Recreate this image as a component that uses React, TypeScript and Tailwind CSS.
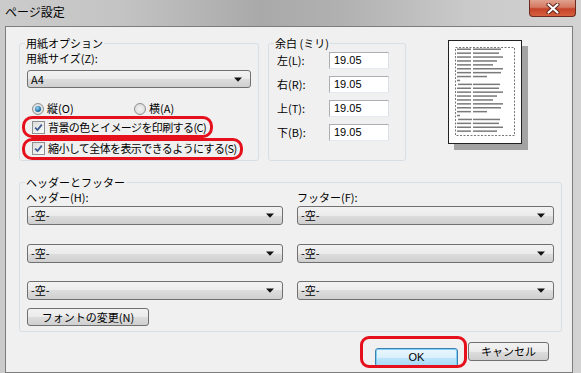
import type { ReactNode } from "react";

const FONT = "font-['Noto_Sans_CJK_JP','Noto_Sans',sans-serif]";

function Arrow() {
  return (
    <svg width="8" height="5" viewBox="0 0 8 5" className="shrink-0">
      <path d="M0 0.5h8L4 4.8z" fill="#111" />
    </svg>
  );
}

function Combo({ value, className = "" }: { value: string; className?: string }) {
  return (
    <div
      className={`flex items-center justify-between rounded-[3px] border border-[#707070] bg-[linear-gradient(#f2f2f2_0%,#ebebeb_50%,#dddddd_50%,#cfcfcf_100%)] pl-[3px] pr-[8px] text-[11px] leading-[13px] text-black ${className}`}
    >
      <span>{value}</span>
      <Arrow />
    </div>
  );
}

function Radio({ checked }: { checked?: boolean }) {
  return (
    <span className="grid h-[12px] w-[12px] shrink-0 place-items-center rounded-full border border-[#8e8f8f] bg-[radial-gradient(circle,#f4f4f4,#d4d4d4)]">
      {checked && (
        <span className="h-[6px] w-[6px] rounded-full bg-[radial-gradient(circle_at_40%_35%,#9fd6f2,#1b6fa8_60%,#0f4a78)]" />
      )}
    </span>
  );
}

function Check() {
  return (
    <span className="grid h-[13px] w-[13px] shrink-0 place-items-center border border-[#8e8f8f] bg-[linear-gradient(135deg,#dcdcdc,#fbfbfb)]">
      <svg width="9" height="9" viewBox="0 0 9 9">
        <path d="M1.2 4.6 3.5 7 7.8 1.6" fill="none" stroke="#3b5a8f" strokeWidth="1.8" />
      </svg>
    </span>
  );
}

function Group({ title, className = "", children }: { title: string; className?: string; children: ReactNode }) {
  return (
    <fieldset className={`rounded-[3px] border border-[#d5dfe5] px-[6px] ${className}`}>
      <legend className="-ml-[1px] px-[1px] text-[11px] leading-[12px]">{title}</legend>
      {children}
    </fieldset>
  );
}

function Preview() {
  const lines = [
    44, 42, 46, 40, 36, 46, 44, 30, 3,
    43, 42, 46, 40, 36, 46, 44, 30, 3,
    43, 42, 46, 40,
  ];
  return (
    <svg width="82" height="112" viewBox="0 0 82 112" className="ml-[42px] mt-[3px] shrink-0">
      <rect x="6" y="6" width="74" height="104" fill="#a3a3a3" />
      <rect x="0.5" y="0.5" width="73" height="103" fill="#fff" stroke="#222" />
      <rect x="7.5" y="7.5" width="59" height="88" fill="none" stroke="#777" strokeDasharray="2 1.5" />
      {lines.map((w, i) => (
        <g key={i} fill="#7a7a7a">
          <rect x={9 + (i === 9 || i === 18 ? 1 : 0)} y={8.5 + i * 3.9} width={Math.min(w, 14)} height="1.5" />
          {w > 14 && <rect x={25} y={8.5 + i * 3.9} width={w - 16} height="1.5" />}
        </g>
      ))}
    </svg>
  );
}

export default function App() {
  return (
    <div
      className={`flex h-[373px] w-[581px] flex-col overflow-hidden bg-[linear-gradient(90deg,#cbcbcb_0%,#c4c4c4_20%,#a9a9a9_45%,#b2b2b2_60%,#c9c9c9_80%,#d3d3d3_100%)] text-black ${FONT}`}
    >
      {/* title bar */}
      <div className="flex h-[26px] shrink-0 items-start justify-between pl-[5px] pr-[5px]">
        <span className="mt-[5px] text-[12px] leading-[14px]">ページ設定</span>
        <button
          type="button"
          className="grid h-[17px] w-[47px] place-items-center rounded-b-[4px] border border-t-0 border-[#6d2a1f] bg-[linear-gradient(#e0a18e_0%,#d47a62_45%,#c5432a_55%,#d6603f_100%)]"
        >
          <svg width="14" height="11" viewBox="0 0 14 11">
            <path d="M2.5 1.5 11.5 9.5M11.5 1.5 2.5 9.5" stroke="#5a2118" strokeWidth="4" strokeLinecap="round" />
            <path d="M2.5 1.5 11.5 9.5M11.5 1.5 2.5 9.5" stroke="#fff" strokeWidth="2.2" strokeLinecap="round" />
          </svg>
        </button>
      </div>

      {/* client area */}
      <div className="ml-[5px] mr-[8px] flex-1 border border-[#7d7d7d] bg-[#f0f0f0] pl-[13px] pr-[10px] pt-[10px]">
        <div className="flex items-start">
          <Group title="用紙オプション" className="h-[124px] w-[240px]">
            <div className="mt-[3px] text-[11px] leading-[12px]">用紙サイズ(Z):</div>
            <Combo value="A4" className="ml-[1px] mt-[6px] h-[18px] w-[224px]" />
            <div className="mt-[14px] flex h-[13px] items-center text-[11px] leading-[13px]">
              <label className="ml-[6px] flex w-[102px] items-center gap-[3px]">
                <Radio checked />
                縦(O)
              </label>
              <label className="flex items-center gap-[3px]">
                <Radio />
                横(A)
              </label>
            </div>
            <div className="relative mt-[6px] flex h-[13px] items-center gap-[3px] pl-[6px] text-[11px] leading-[13px] tracking-[-0.6px]">
              <Check />
              背景の色とイメージを印刷する(C)
              <span className="pointer-events-none absolute -left-[4px] -top-[5px] h-[22px] w-[191px] rounded-[10px] border-[3px] border-[#e5101c]" />
            </div>
            <div className="relative mt-[8px] flex h-[13px] items-center gap-[3px] pl-[6px] text-[11px] leading-[13px] tracking-[-0.6px]">
              <Check />
              縮小して全体を表示できるようにする(S)
              <span className="pointer-events-none absolute -left-[4px] -top-[4px] h-[22px] w-[221px] rounded-[10px] border-[3px] border-[#e5101c]" />
            </div>
          </Group>

          <Group title="余白 (ミリ)" className="ml-[9px] h-[124px] w-[138px]">
            <div className="mt-[3px] flex flex-col gap-[7px]">
              {[
                ["左(L):", "19.05"],
                ["右(R):", "19.05"],
                ["上(T):", "19.05"],
                ["下(B):", "19.05"],
              ].map(([label, v]) => (
                <div key={label} className="flex h-[17px] items-center text-[11px] leading-[13px]">
                  <span className="w-[54px] pl-[2px]">{label}</span>
                  <span className="flex h-[17px] w-[60px] items-center border border-[#abadb3] border-b-[#e3e9ef] border-r-[#dbdfe6] bg-white pl-[4px] font-['Liberation_Sans',sans-serif] text-[11px]">
                    {v}
                  </span>
                </div>
              ))}
            </div>
          </Group>

          <Preview />
        </div>

        <Group title="ヘッダーとフッター" className="mt-[15px] h-[156px] w-[543px] pr-[7px]">
          <div className="flex gap-[14px] pt-[3px]">
            <div className="w-[257px]">
              <div className="h-[13px] text-[11px] leading-[12px]">ヘッダー(H):</div>
              <Combo value="-空-" className="ml-[1px] mt-[2px] h-[19px] w-[256px]" />
              <Combo value="-空-" className="ml-[1px] mt-[19px] h-[19px] w-[256px]" />
              <Combo value="-空-" className="ml-[1px] mt-[18px] h-[19px] w-[256px]" />
              <button
                type="button"
                className="ml-[1px] mt-[8px] h-[18px] w-[122px] rounded-[3px] border border-[#707070] bg-[linear-gradient(#f2f2f2_0%,#ebebeb_50%,#dddddd_50%,#cfcfcf_100%)] text-[11px] leading-[13px]"
              >
                フォントの変更(N)
              </button>
            </div>
            <div className="w-[257px]">
              <div className="h-[13px] text-[11px] leading-[12px]">フッター(F):</div>
              <Combo value="-空-" className="mt-[2px] h-[19px] w-[257px]" />
              <Combo value="-空-" className="mt-[19px] h-[19px] w-[257px]" />
              <Combo value="-空-" className="mt-[18px] h-[19px] w-[257px]" />
            </div>
          </div>
        </Group>

        <div className="mr-[13px] mt-[10px] flex justify-end gap-[10px]">
          <div className="relative">
            <button
              type="button"
              className="h-[19px] w-[83px] rounded-[3px] border border-[#3c7fb1] bg-[linear-gradient(#eaf6fd_0%,#d9f0fc_50%,#bee6fd_50%,#a7d9f5_100%)] font-['Liberation_Sans',sans-serif] text-[11px] leading-[13px] shadow-[inset_0_0_0_1px_#7fd0f5]"
            >
              OK
            </button>
            <span className="pointer-events-none absolute -left-[15px] -top-[6px] h-[32px] w-[107px] rounded-[9px] border-[3px] border-[#e5101c]" />
          </div>
          <button
            type="button"
            className="h-[19px] w-[81px] rounded-[3px] border border-[#707070] bg-[linear-gradient(#f2f2f2_0%,#ebebeb_50%,#dddddd_50%,#cfcfcf_100%)] text-[11px] leading-[13px]"
          >
            キャンセル
          </button>
        </div>
      </div>
    </div>
  );
}
